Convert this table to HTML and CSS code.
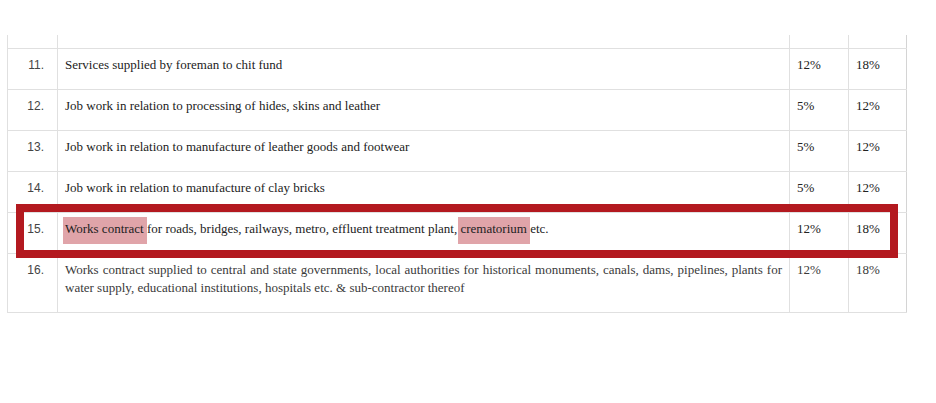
FILE: index.html
```html
<!DOCTYPE html>
<html lang="en">
<head>
    <meta charset="UTF-8">
    <meta name="viewport" content="width=device-width, initial-scale=1.0">
    <title>GST rates on works contract</title>
    <link rel="stylesheet" href="styles.css">
</head>
<body>
    <div class="wrap">
        <table class="rates">
            <colgroup>
                <col class="c-no">
                <col class="c-desc">
                <col class="c-old">
                <col class="c-new">
            </colgroup>
            <tr class="cut">
                <td></td><td></td><td></td><td></td>
            </tr>
            <tr>
                <td class="no">11.</td>
                <td>Services supplied by foreman to chit fund</td>
                <td>12%</td>
                <td>18%</td>
            </tr>
            <tr>
                <td class="no">12.</td>
                <td>Job work in relation to processing of hides, skins and leather</td>
                <td>5%</td>
                <td>12%</td>
            </tr>
            <tr>
                <td class="no">13.</td>
                <td>Job work in relation to manufacture of leather goods and footwear</td>
                <td>5%</td>
                <td>12%</td>
            </tr>
            <tr>
                <td class="no">14.</td>
                <td>Job work in relation to manufacture of clay bricks</td>
                <td>5%</td>
                <td>12%</td>
            </tr>
            <tr>
                <td class="no">15.</td>
                <td><span class="hl">Works contract </span>for roads, bridges, railways, metro, effluent treatment plant, <span class="hl">crematorium </span>etc.</td>
                <td>12%</td>
                <td>18%</td>
            </tr>
            <tr class="muted">
                <td class="no">16.</td>
                <td class="just">Works contract supplied to central and state governments, local authorities for historical monuments, canals, dams, pipelines, plants for water supply, educational institutions, hospitals etc. &amp; sub-contractor thereof</td>
                <td>12%</td>
                <td>18%</td>
            </tr>
        </table>
        <div class="mark"></div>
    </div>
</body>
</html>
```

FILE: styles.css
```css
body{
    margin: 0;
    background: #fff;
}
.wrap{
    position: relative;
    width: 899px;
    padding-top: 35px;
    margin-left: 7px;
}
.rates{
    border-collapse: collapse;
    table-layout: fixed;
    width: 899px;
    font-family: "Liberation Serif", "Times New Roman", serif;
    font-size: 13px;
    line-height: 18px;
    color: #222;
}
.c-no{ width: 50px; }
.c-desc{ width: 732px; }
.c-old{ width: 59px; }
.c-new{ width: 58px; }

.rates td{
    border: 1px solid #e0e0e0;
    padding: 7px 7px 15px;
    vertical-align: top;
}
.rates tr.cut td{
    border-top: none;
    height: 13px;
    padding: 0;
}
.rates td:last-child{
    border-right-color: #d4d4d4;
}
.rates td.no{
    font-family: "Liberation Sans", Arial, sans-serif;
    font-size: 12px;
    color: #444;
    text-align: right;
    padding-right: 13px;
}
.muted td{
    color: #3a3a3a;
}
.just{
    text-align: justify;
}
.hl{
    background: #e0a4a9;
    padding: 4px 0 8px 2px;
    margin-left: -2px;
}
.mark{
    position: absolute;
    left: 9px;
    top: 204px;
    width: 866px;
    height: 38px;
    border: 8px solid #b3191f;
}
```
